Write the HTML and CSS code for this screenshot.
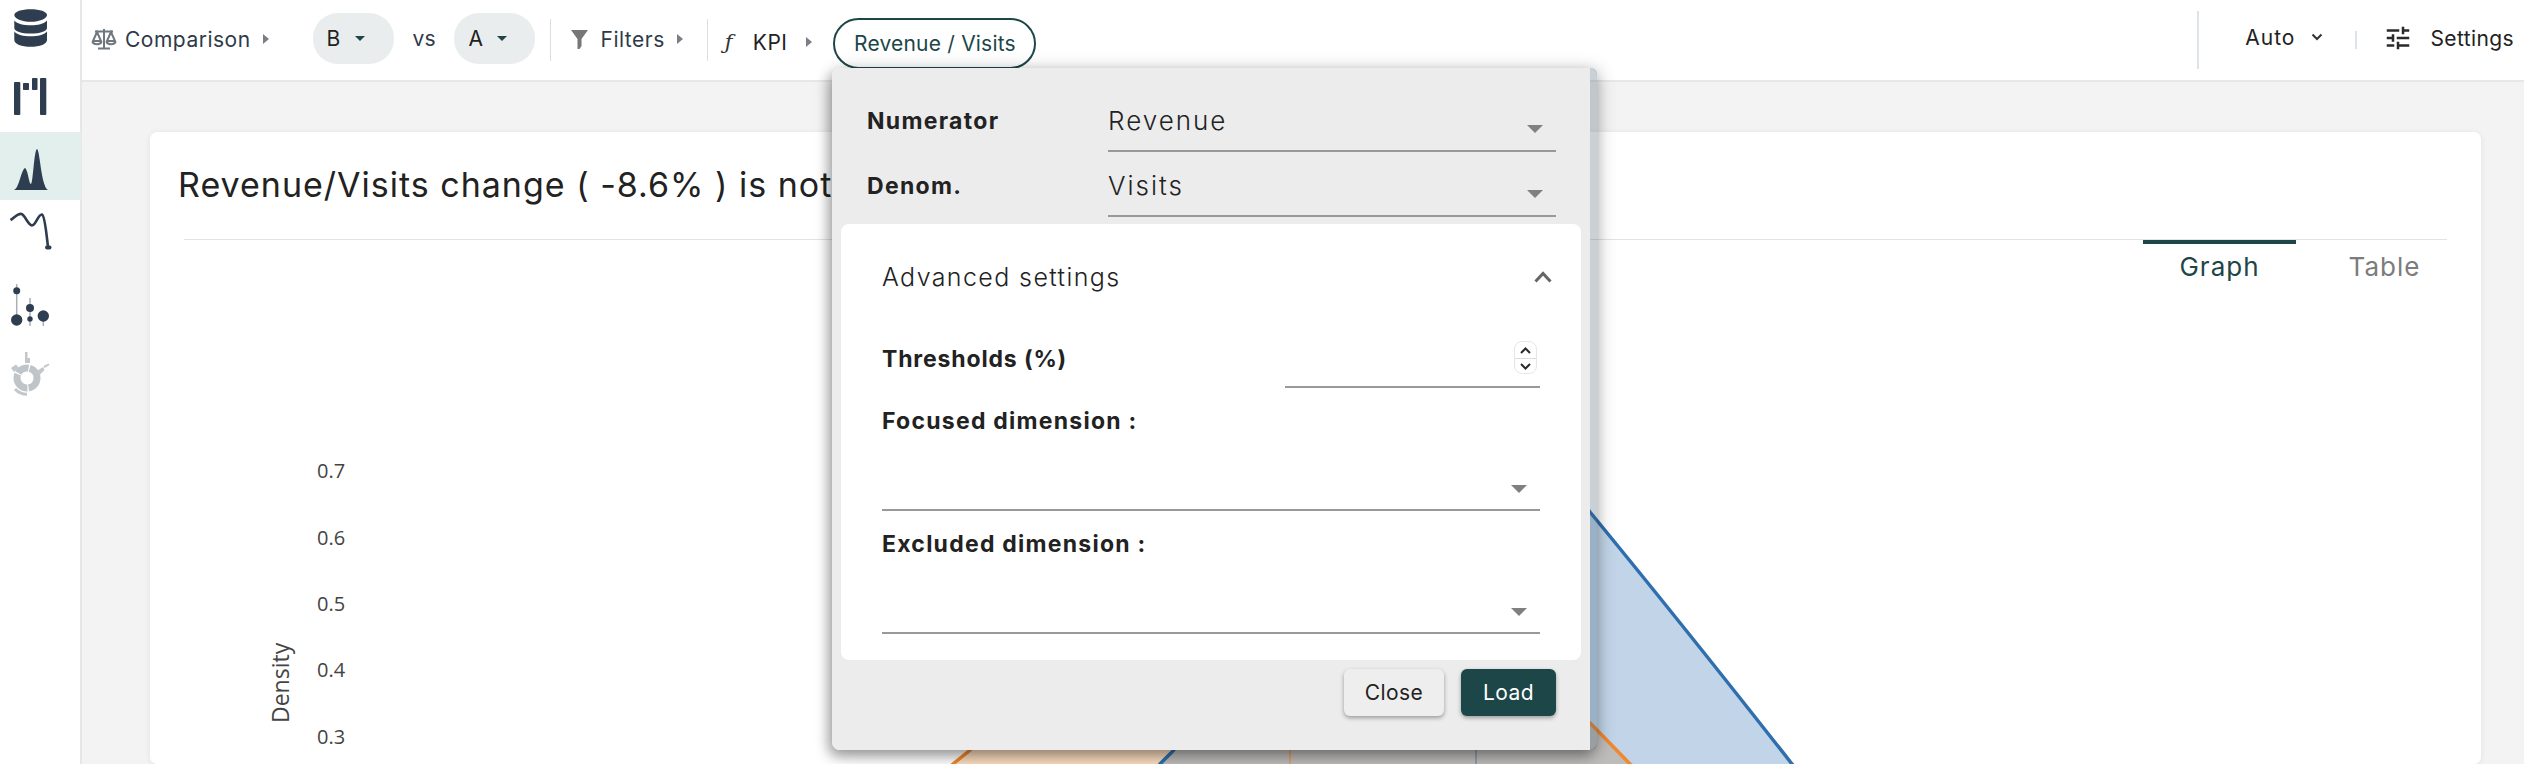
FILE: index.html
```html
<!DOCTYPE html>
<html>
<head>
  <meta charset="utf-8">
  <title>Revenue / Visits</title>
  <link rel="stylesheet" href="styles.css">
</head>
<body>
  <div class="app">
    <nav class="sidebar">
      <a class="nav-item nav-h66">
        <svg width="80" height="66" viewBox="0 0 80 66"><path class="ink" d="M14.3 15c0-3.400 7.400-5.800 16.400-5.800S47 11.600 47 15s-7.300 6.800-16.300 6.800S14.300 18.400 14.300 15z"/><path class="ink" d="M14.300 20.500c3 3.400 9.400 4.800 16.400 4.800s13.300-1.400 16.300-4.800V28c0 3.200-7.300 5.600-16.300 5.600S14.300 31.200 14.300 28z"/><path class="ink" d="M14.300 31.500c3 3.400 9.400 4.800 16.400 4.800s13.300-1.400 16.300-4.800V40c0 4.200-7.300 6.800-16.300 6.800S14.300 44.200 14.300 40z"/></svg>
      </a>
      <a class="nav-item nav-h66">
        <svg width="80" height="66" viewBox="0 66 80 66"><rect class="ink" x="14" y="82" width="6.300" height="33" rx="1"/><rect class="ink" x="23" y="83" width="6" height="7" rx=".8"/><rect class="ink" x="32" y="78" width="5.500" height="12" rx=".8"/><rect class="ink" x="40" y="78" width="6.300" height="37" rx="1"/></svg>
      </a>
      <a class="nav-item nav-active">
        <svg width="80" height="68" viewBox="0 132 80 68"><path class="ink" d="M14 190C19 189 21 170 25 168C28 170 29 184 31 184C33 184 34 150 37 149C40 150 41 186 48 190Z"/></svg>
      </a>
      <a class="nav-item nav-h66">
        <svg width="80" height="66" viewBox="0 200 80 66"><path class="ink-line" d="M10.500 220C14 218 18 213 21.500 214C25 215 28 225 32 225.500C36 225.500 38 214 42 214.500C45 216 46.500 235 48 247"/><rect class="ink" x="45" y="245.500" width="6.500" height="4" rx="2"/></svg>
      </a>
      <a class="nav-item nav-h76">
        <svg width="80" height="76" viewBox="0 266 80 76"><path class="ink-thin" d="M16.700 284V320M30 298V326M43.300 316V326"/><circle class="ink" cx="16.700" cy="290.700" r="3.500"/><circle class="ink" cx="16.700" cy="320" r="5.700"/><circle class="ink" cx="30" cy="308" r="4"/><circle class="ink" cx="30" cy="319" r="2.700"/><circle class="ink" cx="43.300" cy="316" r="5.700"/></svg>
      </a>
      <a class="nav-item nav-h70">
        <svg width="80" height="70" viewBox="0 342 80 70"><circle class="ghost-ring" cx="27" cy="378" r="10" stroke-dasharray="14 1.200 20 1.200 12 1.200 14"/><path class="ghost-arc" d="M15 389A16.300 16.300 0 0 0 27 394.300"/><path class="ghost" d="M25 352h2.500v6h2.500v5h-5zM11 368l5-3.500 3 3.500-5 4zM37 371l6-4 1.500 3-5 5zM43.500 366l5-2.500 1 1.500-5 3z"/></svg>
      </a>
    </nav>

    <div class="main">
      <header class="toolbar">
        <div class="tool tool-comparison">
          <svg width="26" height="22" viewBox="0 0 26 22"><path class="scale" d="M13 1V20M7 20.500H19M4 3.500H22M6 4L2 13H10ZM20 4L16 13H24ZM1.500 13.500C2 17 10 17 10.500 13.500M15.500 13.500C16 17 24 17 24.500 13.500"/></svg>
          <span class="tool-label">Comparison</span>
          <i class="caret-right"></i>
        </div>
        <div class="pill pill-b"><span>B</span><i class="caret-down"></i></div>
        <span class="vs">vs</span>
        <div class="pill pill-a"><span>A</span><i class="caret-down"></i></div>
        <span class="tool-sep sep-filters"></span>
        <div class="tool tool-filters">
          <svg width="17" height="20" viewBox="0 0 17 20"><path class="funnel" d="M0 1H17L10.500 10V17L8.500 20H6.500V10Z"/></svg>
          <span class="tool-label">Filters</span>
          <i class="caret-right"></i>
        </div>
        <span class="tool-sep sep-kpi"></span>
        <div class="tool tool-kpi">
          <span class="kpi-f">ƒ</span>
          <span class="tool-label">KPI</span>
          <i class="caret-right"></i>
        </div>
        <div class="kpi-chip">Revenue / Visits</div>

        <div class="toolbar-right">
          <span class="right-sep"></span>
          <div class="auto"><span>Auto</span>
            <svg width="12" height="8" viewBox="0 0 12 8"><path class="chev" d="M1.500 1.500L6 6L10.500 1.500"/></svg>
          </div>
          <span class="right-sep-small"></span>
          <svg class="tune" width="30" height="30" viewBox="0 0 24 24"><path d="M3 17v2h6v-2H3zM3 5v2h10V5H3zm10 16v-2h8v-2h-8v-2h-2v6h2zM7 9v2H3v2h4v2h2V9H7zm14 4v-2H11v2h10zm-6-4h2V7h4V5h-4V3h-2v6z"/></svg>
          <span class="settings-label">Settings</span>
        </div>
      </header>

      <section class="content">
        <div class="card">
          <h2 class="card-title">Revenue/Visits change ( -8.6% ) is not</h2>
          <div class="card-rule"></div>
          <div class="tabs">
            <div class="tab tab-active">Graph</div>
            <div class="tab">Table</div>
          </div>
          <svg class="chart" width="2331" height="474" viewBox="150 290 2331 474">
            <path class="area-orange" d="M900 820L953 764L969 751C1080 640 1200 600 1290 590C1420 580 1520 650 1594 727L1630 764L1700 820Z"/>
            <path class="area-blue" d="M1120 820L1160 764L1173 751C1280 590 1400 400 1476 395C1530 400 1560 470 1590 512C1650 585 1730 685 1792 764L1840 820Z"/>
            <path class="line-orange" d="M900 820L953 764L969 751C1080 640 1200 600 1290 590C1420 580 1520 650 1594 727L1630 764L1700 820"/>
            <path class="line-blue" d="M1120 820L1160 764L1173 751C1280 590 1400 400 1476 395C1530 400 1560 470 1590 512C1650 585 1730 685 1792 764L1840 820"/>
            <path class="mean-orange" d="M1290 590V764"/>
            <path class="mean-blue" d="M1476 395V764"/>
            <text class="tick" x="317" y="478">0.7</text>
            <text class="tick" x="317" y="545">0.6</text>
            <text class="tick" x="317" y="611">0.5</text>
            <text class="tick" x="317" y="677">0.4</text>
            <text class="tick" x="317" y="744">0.3</text>
            <text class="axis-title" transform="translate(289 723) rotate(-90)">Density</text>
          </svg>
        </div>
      </section>
    </div>

    <div class="popover">
      <div class="popover-panel">
        <div class="metric-row">
          <label class="metric-label">Numerator</label>
          <div class="select select-top"><span class="select-value">Revenue</span><i class="select-arrow"></i></div>
        </div>
        <div class="metric-row">
          <label class="metric-label">Denom.</label>
          <div class="select select-top"><span class="select-value">Visits</span><i class="select-arrow"></i></div>
        </div>
        <div class="advanced">
          <div class="advanced-head">
            <span>Advanced settings</span>
            <svg width="20" height="14" viewBox="0 0 20 14"><path class="adv-chev" d="M2.500 11.500L10 3.500L17.500 11.500"/></svg>
          </div>
          <div class="threshold-row">
            <label class="field-label threshold-label">Thresholds (%)</label>
            <div class="threshold-input">
              <div class="spinner">
                <svg width="23" height="16" viewBox="0 0 23 16"><path class="spin-chev" d="M7 11L11.500 6.500L16 11"/></svg>
                <svg width="23" height="16" viewBox="0 0 23 16"><path class="spin-chev" d="M7 5L11.500 9.500L16 5"/></svg>
              </div>
            </div>
          </div>
          <label class="field-label field-gap">Focused dimension :</label>
          <div class="select select-card"><i class="select-arrow"></i></div>
          <label class="field-label field-gap">Excluded dimension :</label>
          <div class="select select-card"><i class="select-arrow"></i></div>
        </div>
        <div class="popover-foot">
          <button class="btn btn-close">Close</button>
          <button class="btn btn-load">Load</button>
        </div>
      </div>
      <div class="popover-scroll"></div>
    </div>
  </div>
</body>
</html>
```

FILE: styles.css
```css
html, body {
  margin: 0;
  height: 100%;
  overflow: hidden;
}
body {
  font-family: Inter, "Liberation Sans", sans-serif;
  color: #222;
  background: #f3f3f3;
}
.app {
  position: relative;
  display: flex;
  width: 2524px;
  height: 764px;
  overflow: hidden;
}

/* left nav */
.sidebar {
  flex: none;
  width: 80px;
  background: #fff;
  border-right: 2px solid #e7e7e7;
}
.nav-item {
  display: block;
  height: 66px;
}
.nav-item svg {
  display: block;
}
.nav-active {
  height: 68px;
  width: 81px;
  background: #e3efec;
}
.nav-h76 {
  height: 76px;
}
.nav-h70 {
  height: 70px;
}
.ink {
  fill: #2e3d50;
}
.ink-line {
  fill: none;
  stroke: #2e3d50;
  stroke-width: 2.600;
}
.ink-thin {
  fill: none;
  stroke: #a9afb6;
  stroke-width: 1.500;
}
.ghost {
  fill: #c3c7cc;
}
.ghost-ring {
  fill: none;
  stroke: #bfc4c9;
  stroke-width: 7;
}
.ghost-arc {
  fill: none;
  stroke: #c3c7cc;
  stroke-width: 3;
}

/* top bar */
.main {
  flex: 1;
  min-width: 0;
  display: flex;
  flex-direction: column;
}
.toolbar {
  flex: none;
  display: flex;
  align-items: center;
  height: 82px;
  box-sizing: border-box;
  padding-left: 9px;
  background: #fff;
  border-bottom: 2px solid #e7e7e7;
  font-size: 21px;
}
.tool {
  display: flex;
  align-items: center;
}
.tool-label {
  color: #2f3a48;
  letter-spacing: .5px;
}
.tool-comparison .tool-label {
  margin-left: 8px;
}
.tool-comparison {
  margin-top: -2px;
}
.caret-right {
  display: block;
  margin-left: 12px;
  border-left: 6px solid #7a7f85;
  border-top: 5px solid transparent;
  border-bottom: 5px solid transparent;
}
.pill {
  display: flex;
  align-items: center;
  box-sizing: border-box;
  width: 81px;
  height: 51px;
  margin-top: -3px;
  padding-left: 14px;
  border-radius: 25px;
  background: #e9eded;
  letter-spacing: .4px;
}
.pill-b {
  margin-left: 44px;
}
.caret-down {
  display: block;
  margin-left: 14px;
  border-top: 5px solid #1c4648;
  border-left: 5px solid transparent;
  border-right: 5px solid transparent;
}
.vs {
  margin: -4px 19px 0;
  color: #2f3a48;
}
.tool-sep {
  width: 1px;
  height: 42px;
  background: #ddd;
}
.sep-filters {
  margin-left: 15px;
}
.tool-filters {
  margin-left: 20px;
  margin-top: -2px;
}
.tool-filters .tool-label {
  margin-left: 12px;
}
.sep-kpi {
  margin-left: 24px;
}
.tool-kpi {
  margin-left: 17px;
  margin-top: 4px;
}
.kpi-f {
  width: 28px;
  font-family: "DejaVu Serif", serif;
  font-style: italic;
  color: #333;
}
.tool-kpi .tool-label {
  color: #222;
}
.tool-kpi .caret-right {
  margin-left: 19px;
}
.kpi-chip {
  box-sizing: border-box;
  width: 203px;
  height: 51px;
  margin-left: 21px;
  margin-top: 6px;
  border: 2px solid #1c4648;
  border-radius: 26px;
  font-size: 21px;
  line-height: 47px;
  text-align: center;
  color: #1c4648;
  background: #fff;
  letter-spacing: .2px;
}
.toolbar-right {
  display: flex;
  align-items: center;
  margin-left: auto;
  padding-right: 10px;
}
.right-sep {
  width: 2px;
  height: 58px;
  margin-right: 46px;
  background: #dde3e8;
}
.auto {
  display: flex;
  align-items: center;
  margin-top: -6px;
  letter-spacing: 1px;
}
.auto svg {
  margin-left: 16px;
}
.chev {
  fill: none;
  stroke: #333;
  stroke-width: 2;
}
.right-sep-small {
  width: 2px;
  height: 18px;
  margin-left: 32px;
  margin-right: 26px;
  background: #dde3e8;
}
.tune {
  margin-top: -4px;
  fill: #2a2a2a;
}
.settings-label {
  margin-left: 17px;
  margin-top: -3px;
  letter-spacing: .4px;
}

/* card */
.content {
  flex: 1;
  padding: 50px 43px 0 68px;
  min-height: 0;
}
.card {
  background: #fff;
  border-radius: 7px;
  box-shadow: 0 1px 6px rgba(0, 0, 0, .08);
}
.card-title {
  margin: 0;
  padding: 30px 0 31px 28px;
  font-size: 34px;
  font-weight: 400;
  line-height: 46px;
  letter-spacing: 1px;
  color: #222;
  white-space: nowrap;
}
.card-rule {
  height: 1px;
  margin: 0 34px;
  background: #e3e3e3;
}
.tabs {
  display: flex;
  justify-content: flex-end;
  gap: 12px;
  padding-right: 20px;
}
.tab {
  width: 153px;
  height: 50px;
  box-sizing: border-box;
  padding-top: 8px;
  border-top: 4px solid transparent;
  font-size: 26px;
  line-height: 30px;
  font-weight: 400;
  letter-spacing: 1px;
  text-align: center;
  color: #7c7c7c;
}
.tab-active {
  border-top-color: #1c4648;
  color: #1c4648;
}
.chart {
  display: block;
}
.area-orange {
  fill: rgba(242, 142, 43, .3);
}
.area-blue {
  fill: rgba(49, 112, 180, .3);
}
.line-orange, .line-blue, .mean-orange, .mean-blue {
  fill: none;
  stroke-width: 3.500;
}
.line-orange {
  stroke: #f0882d;
}
.line-blue {
  stroke: #2f6fad;
}
.mean-orange {
  stroke: #e3a069;
  stroke-width: 2;
}
.mean-blue {
  stroke: #8f9cad;
  stroke-width: 2;
}
.tick, .axis-title {
  font-family: "Open Sans", sans-serif;
  fill: #444;
}
.tick {
  font-size: 20px;
}
.axis-title {
  font-size: 23px;
}

/* KPI popover */
.popover {
  position: absolute;
  left: 832px;
  top: 68px;
  display: flex;
  width: 765px;
  height: 682px;
  border-radius: 8px;
  box-shadow: -3px 6px 14px rgba(0, 0, 0, .38), 4px 0 18px rgba(0, 0, 0, .14);
}
.popover-panel {
  flex: none;
  width: 758px;
  box-sizing: border-box;
  padding: 40px 9px 0;
  background: #ececec;
  border-radius: 8px 0 0 8px;
}
.popover-scroll {
  flex: 1;
  border-radius: 0 6px 6px 0;
  background: rgba(40, 70, 90, .25);
}
.metric-row {
  display: flex;
  margin: 0 25px 21px 26px;
}
.metric-row:nth-child(2) {
  margin-bottom: 7px;
}
.metric-label {
  width: 241px;
  font-size: 23px;
  font-weight: 700;
  line-height: 26px;
  letter-spacing: 1.300px;
  color: #222;
}
.select {
  display: flex;
  justify-content: space-between;
  box-sizing: border-box;
  border-bottom: 2px solid #999;
}
.select-top {
  width: 448px;
  height: 44px;
}
.select-top .select-arrow {
  margin-bottom: 17px;
}
.select-card {
  height: 77px;
  justify-content: flex-end;
}
.select-value {
  font-size: 26px;
  font-weight: 300;
  line-height: 26px;
  letter-spacing: 2px;
  color: #222;
}
.select-arrow {
  display: block;
  align-self: flex-end;
  margin-bottom: 16px;
  margin-right: 13px;
  border-top: 8px solid #808080;
  border-left: 8px solid transparent;
  border-right: 8px solid transparent;
}
.advanced {
  box-sizing: border-box;
  height: 436px;
  padding: 36px 41px 0 41px;
  background: #fff;
  border-radius: 8px;
}
.advanced-head {
  display: flex;
  justify-content: space-between;
  align-items: center;
  height: 34px;
  margin-right: -13px;
  font-size: 25px;
  font-weight: 300;
  letter-spacing: 1.400px;
  color: #222;
}
.adv-chev {
  fill: none;
  stroke: #666;
  stroke-width: 3;
}
.threshold-row {
  display: flex;
  justify-content: space-between;
  height: 54px;
  margin-top: 40px;
}
.field-label {
  display: block;
  font-size: 23px;
  font-weight: 700;
  line-height: 26px;
  letter-spacing: 1.250px;
  color: #222;
}
.threshold-label {
  line-height: 50px;
  letter-spacing: .85px;
}
.field-gap {
  margin-top: 20px;
}
.threshold-input {
  display: flex;
  justify-content: flex-end;
  box-sizing: border-box;
  width: 255px;
  border-bottom: 2px solid #999;
}
.spinner {
  width: 23px;
  height: 33px;
  margin: 7px 3px 0 0;
  border-radius: 8px;
  border: 1px solid #e6e6e6;
  box-sizing: border-box;
  overflow: hidden;
}
.spinner svg {
  display: block;
  margin-left: -1px;
}
.spinner svg + svg {
  border-top: 1px solid #ddd;
}
.spin-chev {
  fill: none;
  stroke: #2a2a2a;
  stroke-width: 2;
}
.popover-foot {
  display: flex;
  justify-content: flex-end;
  gap: 17px;
  margin-top: 9px;
  padding-right: 25px;
}
.btn {
  height: 47px;
  padding: 0;
  border: 0;
  border-radius: 6px;
  font-family: Inter, "Liberation Sans", sans-serif;
  font-size: 21px;
  letter-spacing: .4px;
  box-shadow: 0 2px 4px rgba(0, 0, 0, .35);
}
.btn-close {
  width: 100px;
  background: #eee;
  color: #222;
}
.btn-load {
  width: 95px;
  background: #1c4648;
  color: #fff;
}
.scale {
  fill: none;
  stroke: #6f7780;
  stroke-width: 2;
}
.funnel {
  fill: #777;
}
```
